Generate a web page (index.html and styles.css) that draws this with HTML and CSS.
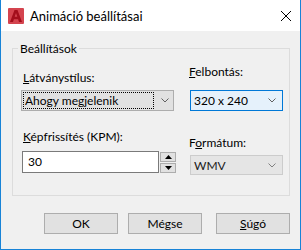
FILE: index.html
```html
<!DOCTYPE html>
<html lang="hu">
<head>
<meta charset="UTF-8">
<meta name="viewport" content="width=device-width, initial-scale=1.0">
<title>Animáció beállításai</title>
<link rel="stylesheet" href="styles.css">
</head>
<body>
<div class="window">
    <div class="titlebar">
        <svg class="app-icon" width="16" height="16" viewBox="0 0 16 16">
            <rect width="16" height="16" rx="1" fill="#d4444f"/>
            <path d="M2 14 L6.5 2 H9.5 L14 14 H11 L10.1 11.3 H5.9 L5 14 Z M6.7 8.8 H9.3 L8 5 Z" fill="#a30e1c" fill-rule="evenodd"/>
        </svg>
        <span class="title">Animáció beállításai</span>
        <svg class="close" width="10" height="10" viewBox="0 0 10 10">
            <path d="M0 0 L10 10 M10 0 L0 10" stroke="#000" stroke-width="1"/>
        </svg>
    </div>
    <div class="content">
        <fieldset class="group">
            <legend>Beállítások</legend>
            <div class="group-body">
                <div class="col col-left">
                    <div class="lbl lbl-style"><u>L</u>átványstílus:</div>
                    <div class="combo combo-main">
                        <span class="focus-rect">Ahogy megjelenik</span>
                        <svg class="chev" width="8" height="5" viewBox="0 0 8 5"><path d="M0.5 0.5 L4 4 L7.5 0.5" fill="none" stroke="#606060"/></svg>
                    </div>
                    <div class="lbl lbl-fps"><u>K</u>épfrissítés (KPM):</div>
                    <div class="spin-row">
                        <div class="textbox">30</div>
                        <div class="spin">
                            <div class="spin-btn"><svg width="7" height="4" viewBox="0 0 7 4"><path d="M3.5 0 L7 4 H0 Z" fill="#000"/></svg></div>
                            <div class="spin-btn"><svg width="7" height="4" viewBox="0 0 7 4"><path d="M0 0 H7 L3.5 4 Z" fill="#000"/></svg></div>
                        </div>
                    </div>
                </div>
                <div class="col col-right">
                    <div class="lbl lbl-res"><u>F</u>elbontás:</div>
                    <div class="combo combo-hover">
                        <span class="combo-text">320 x 240</span>
                        <svg class="chev" width="8" height="5" viewBox="0 0 8 5"><path d="M0.5 0.5 L4 4 L7.5 0.5" fill="none" stroke="#606060"/></svg>
                    </div>
                    <div class="lbl lbl-fmt">F<u>o</u>rmátum:</div>
                    <div class="combo combo-fmt">
                        <span class="combo-text">WMV</span>
                        <svg class="chev" width="8" height="5" viewBox="0 0 8 5"><path d="M0.5 0.5 L4 4 L7.5 0.5" fill="none" stroke="#808080"/></svg>
                    </div>
                </div>
            </div>
        </fieldset>
        <div class="buttons">
            <div class="btn btn-ok">OK</div>
            <div class="btn btn-cancel">Mégse</div>
            <div class="btn"><u>S</u>úgó</div>
        </div>
    </div>
</div>
</body>
</html>
```

FILE: styles.css
```css
body {
    margin: 0;
    font-family: Lato, "Noto Sans", sans-serif;
    font-size: 12px;
    color: #000;
}
.window {
    width: 299px;
    height: 249px;
    border: 1px solid #1883d7;
    border-top: 0;
    background: #f0f0f0;
    display: flex;
    flex-direction: column;
}
.titlebar {
    height: 31px;
    background: #fff;
    display: flex;
    align-items: center;
    padding-left: 7px;
}
.app-icon { flex: none; }
.title {
    margin-left: 6px;
    font-size: 13px;
}
.close {
    margin-left: auto;
    margin-right: 9px;
}
.content {
    flex: 1;
    padding: 9px 10px 0 11px;
}
.group {
    margin: 0;
    padding: 0 0 20px 0;
    border: 1px solid #dcdcdc;
    min-inline-size: 0;
}
.group legend {
    margin-left: 5px;
    padding: 0 2px;
    line-height: 17px;
}
.group-body {
    display: flex;
    align-items: flex-start;
}
.col {
    display: flex;
    flex-direction: column;
    align-items: flex-start;
}
.col-left {
    width: 155px;
    margin-left: 8px;
}
.col-right {
    margin-left: 14px;
}
.lbl {
    line-height: 16px;
    white-space: nowrap;
}
.lbl-style { margin: 13px 0 0 2px; }
.lbl-fps { margin: 18px 0 0 2px; }
.lbl-res { margin: 7px 0 0 -1px; }
.lbl-fmt { margin: 24px 0 0 -1px; }
.combo {
    box-sizing: border-box;
    height: 21px;
    border: 1px solid #adadad;
    background: #e1e1e1;
    display: flex;
    align-items: center;
    padding: 1px;
}
.combo-main {
    width: 153px;
    margin-top: 4px;
}
.focus-rect {
    box-sizing: border-box;
    width: 131px;
    height: 17px;
    border: 1px dotted #000;
    line-height: 15px;
    padding-left: 1px;
}
.combo-main .chev { margin-left: 7px; }
.combo-hover {
    width: 93px;
    margin-top: 10px;
    border-color: #0078d7;
    background: #e5f1fb;
}
.combo-text {
    flex: 1;
    padding-left: 2px;
}
.combo-hover .chev,
.combo-fmt .chev { margin-right: 5px; }
.combo-fmt {
    width: 93px;
    height: 20px;
    margin-top: 4px;
    border-color: #cccccc;
    background: #e5e5e5;
    color: #1a1a1a;
}
.spin-row {
    display: flex;
    margin-top: 6px;
}
.textbox {
    box-sizing: border-box;
    width: 137px;
    height: 22px;
    margin-left: 1px;
    border: 1px solid #7a7a7a;
    background: #fff;
    line-height: 20px;
    padding-left: 5px;
}
.spin {
    margin: 1px 0 0 1px;
    display: flex;
    flex-direction: column;
    gap: 1px;
}
.spin-btn {
    box-sizing: border-box;
    width: 16px;
    height: 10px;
    border: 1px solid #adadad;
    background: #e1e1e1;
    display: flex;
    align-items: center;
    justify-content: center;
}
.buttons {
    display: flex;
    justify-content: flex-end;
    margin-top: 17px;
}
.btn {
    box-sizing: border-box;
    width: 74px;
    height: 21px;
    border: 1px solid #adadad;
    background: #e1e1e1;
    text-align: center;
    line-height: 19px;
}
.btn-ok { margin-right: 10px; }
.btn-cancel { margin-right: 14px; }
```
